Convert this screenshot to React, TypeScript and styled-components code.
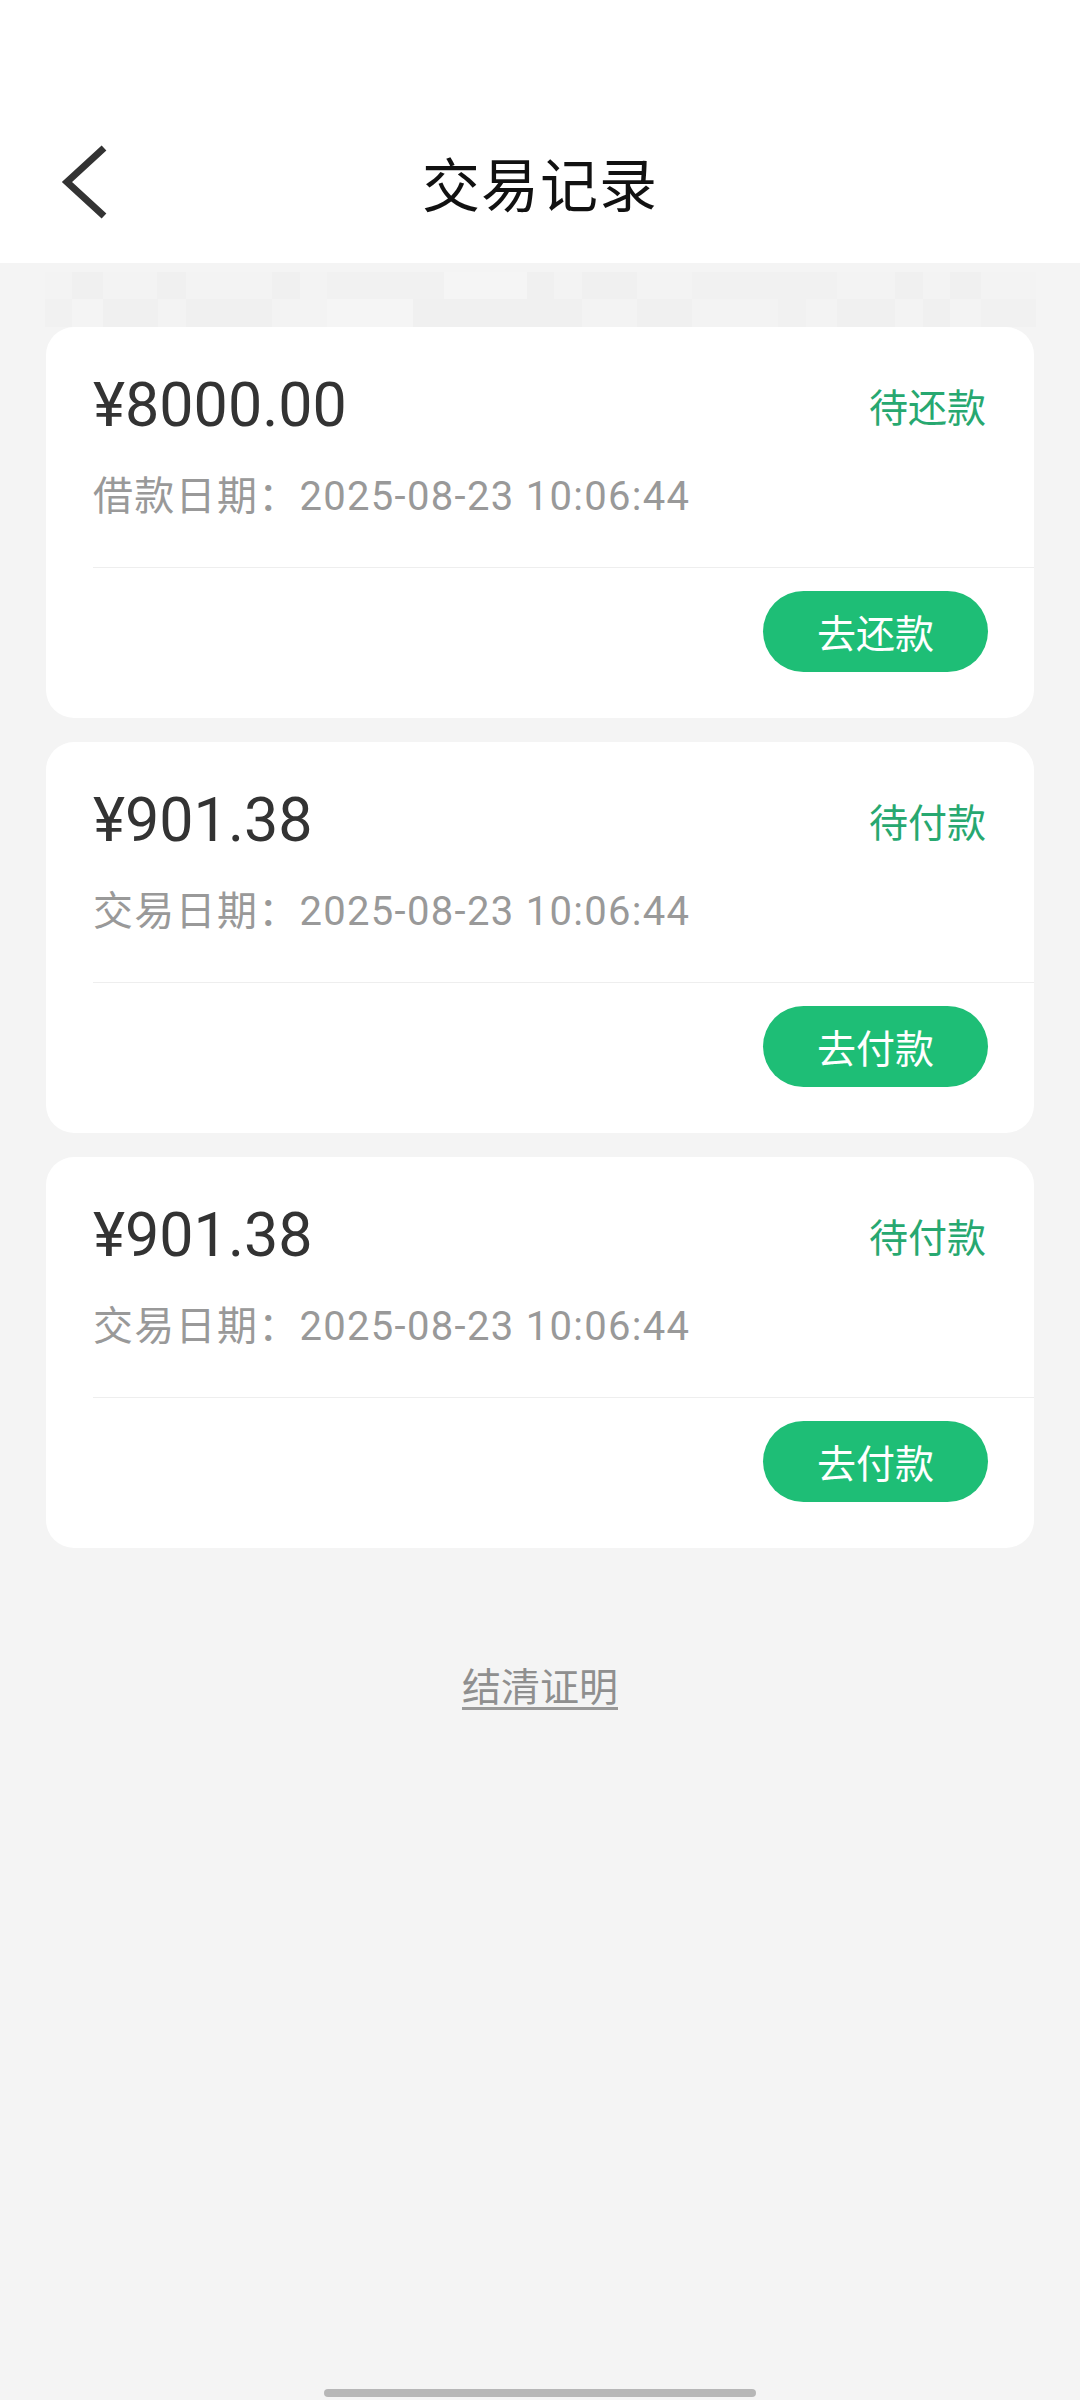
import React from "react";
import styled, { createGlobalStyle } from "styled-components";

const GlobalStyle = createGlobalStyle`
  html, body {
    margin: 0;
    padding: 0;
    background: #f4f4f4;
  }
  * { box-sizing: border-box; }
`;

const FONT = `Roboto, "Noto Sans CJK SC", "Noto Sans", sans-serif`;

const Page = styled.div`
  min-height: 2400px;
  display: flex;
  flex-direction: column;
  background: #f4f4f4;
  font-family: ${FONT};
`;

const Header = styled.header`
  height: 263px;
  padding-top: 100px;
  background: #ffffff;
  display: grid;
  grid-template-columns: 1fr auto 1fr;
  align-items: center;
`;

const BackButton = styled.button`
  justify-self: start;
  margin-left: 52px;
  width: 64px;
  height: 90px;
  padding: 0;
  border: none;
  background: transparent;
  display: flex;
  align-items: center;
  justify-content: center;
`;

const Title = styled.h1`
  margin: 0;
  font-family: "Noto Sans CJK SC", sans-serif;
  font-size: 58px;
  font-weight: 400;
  color: #111111;
  line-height: 80px;
  letter-spacing: 1px;
`;

const Mosaic = styled.svg`
  display: block;
  width: 1080px;
  height: 55px;
  margin-top: 9px;
`;

const List = styled.div`
  display: flex;
  flex-direction: column;
  gap: 24px;
  padding: 0 46px;
`;

const Card = styled.section`
  background: #ffffff;
  border-radius: 28px;
  overflow: hidden;
`;

const CardTop = styled.div`
  padding: 43px 47px 45px 47px;
`;

const AmountRow = styled.div`
  display: flex;
  justify-content: space-between;
  align-items: center;
  height: 70px;
`;

const Amount = styled.div`
  font-family: ${FONT};
  font-size: 61px;
  line-height: 70px;
  color: #333333;
`;

const Status = styled.div`
  font-family: "Noto Sans CJK SC", sans-serif;
  font-size: 39px;
  line-height: 50px;
  color: #27a870;
  margin-right: 1px;
`;

const DateLine = styled.div`
  margin-top: 32px;
  font-family: ${FONT};
  font-size: 40px;
  line-height: 50px;
  color: #999999;
  letter-spacing: 1.3px;
  white-space: nowrap;
`;

const CardBottom = styled.div`
  margin-left: 47px;
  border-top: 1.5px solid #eeeeee;
  padding: 23px 46px 46px 0;
  display: flex;
  justify-content: flex-end;
`;

const ActionButton = styled.button`
  width: 225px;
  height: 81px;
  border: none;
  border-radius: 41px;
  background: #1ebe76;
  color: #ffffff;
  font-family: "Noto Sans CJK SC", sans-serif;
  font-size: 39px;
  line-height: 81px;
  padding: 0;
`;

const SettleLink = styled.a`
  align-self: center;
  margin-top: 108px;
  font-family: "Noto Sans CJK SC", sans-serif;
  font-size: 39px;
  line-height: 56px;
  color: #8f8f8f;
  text-decoration: underline;
  text-decoration-thickness: 3px;
  text-underline-offset: 6px;
  text-decoration-color: #999999;
  cursor: pointer;
`;

const HomeIndicator = styled.div`
  align-self: center;
  margin-top: auto;
  margin-bottom: 3px;
  width: 432px;
  height: 8px;
  border-radius: 4px;
  background: #b7b7b7;
`;

type Block = [number, number, string];

const row1: Block[] = [
  [72, 31, "#f0f0f0"],
  [157, 29, "#f0f0f0"],
  [272, 28, "#f0f0f0"],
  [327, 117, "#f1f1f1"],
  [444, 83, "#f5f5f5"],
  [527, 27, "#f0f0f0"],
  [582, 55, "#f0f0f0"],
  [692, 145, "#f1f1f1"],
  [895, 28, "#f0f0f0"],
  [950, 31, "#f0f0f0"],
];

const row2: Block[] = [
  [45, 27, "#f1f1f1"],
  [72, 31, "#f4f4f4"],
  [103, 55, "#f0f0f0"],
  [186, 86, "#f0f0f0"],
  [327, 86, "#f5f5f5"],
  [413, 169, "#f0f0f0"],
  [637, 55, "#f0f0f0"],
  [778, 28, "#f1f1f1"],
  [837, 58, "#f0f0f0"],
  [923, 27, "#f0f0f0"],
  [981, 55, "#f1f1f1"],
];

const MosaicStrip = () => (
  <Mosaic viewBox="0 0 1080 55" aria-hidden="true">
    <rect x="45" y="0" width="991" height="55" fill="#f3f3f3" />
    {row1.map(([x, w, c], i) => (
      <rect key={`a${i}`} x={x} y={0} width={w} height={27} fill={c} />
    ))}
    {row2.map(([x, w, c], i) => (
      <rect key={`b${i}`} x={x} y={27} width={w} height={28} fill={c} />
    ))}
  </Mosaic>
);

type Record = {
  amount: string;
  status: string;
  dateLabel: string;
  date: string;
  action: string;
};

const records: Record[] = [
  {
    amount: "¥8000.00",
    status: "待还款",
    dateLabel: "借款日期：",
    date: "2025-08-23 10:06:44",
    action: "去还款",
  },
  {
    amount: "¥901.38",
    status: "待付款",
    dateLabel: "交易日期：",
    date: "2025-08-23 10:06:44",
    action: "去付款",
  },
  {
    amount: "¥901.38",
    status: "待付款",
    dateLabel: "交易日期：",
    date: "2025-08-23 10:06:44",
    action: "去付款",
  },
];

const RecordCard = ({ r }: { r: Record }) => (
  <Card>
    <CardTop>
      <AmountRow>
        <Amount>{r.amount}</Amount>
        <Status>{r.status}</Status>
      </AmountRow>
      <DateLine>
        {r.dateLabel}
        {r.date}
      </DateLine>
    </CardTop>
    <CardBottom>
      <ActionButton>{r.action}</ActionButton>
    </CardBottom>
  </Card>
);

export default function App() {
  return (
    <>
      <GlobalStyle />
      <Page>
        <Header>
          <BackButton aria-label="返回">
            <svg width="50" height="76" viewBox="0 0 50 76">
              <polyline
                points="45,4 8,38 45,72"
                fill="none"
                stroke="#333333"
                strokeWidth="7"
                strokeLinejoin="miter"
              />
            </svg>
          </BackButton>
          <Title>交易记录</Title>
          <div />
        </Header>
        <MosaicStrip />
        <List>
          {records.map((r, i) => (
            <RecordCard key={i} r={r} />
          ))}
        </List>
        <SettleLink>结清证明</SettleLink>
        <HomeIndicator />
      </Page>
    </>
  );
}
